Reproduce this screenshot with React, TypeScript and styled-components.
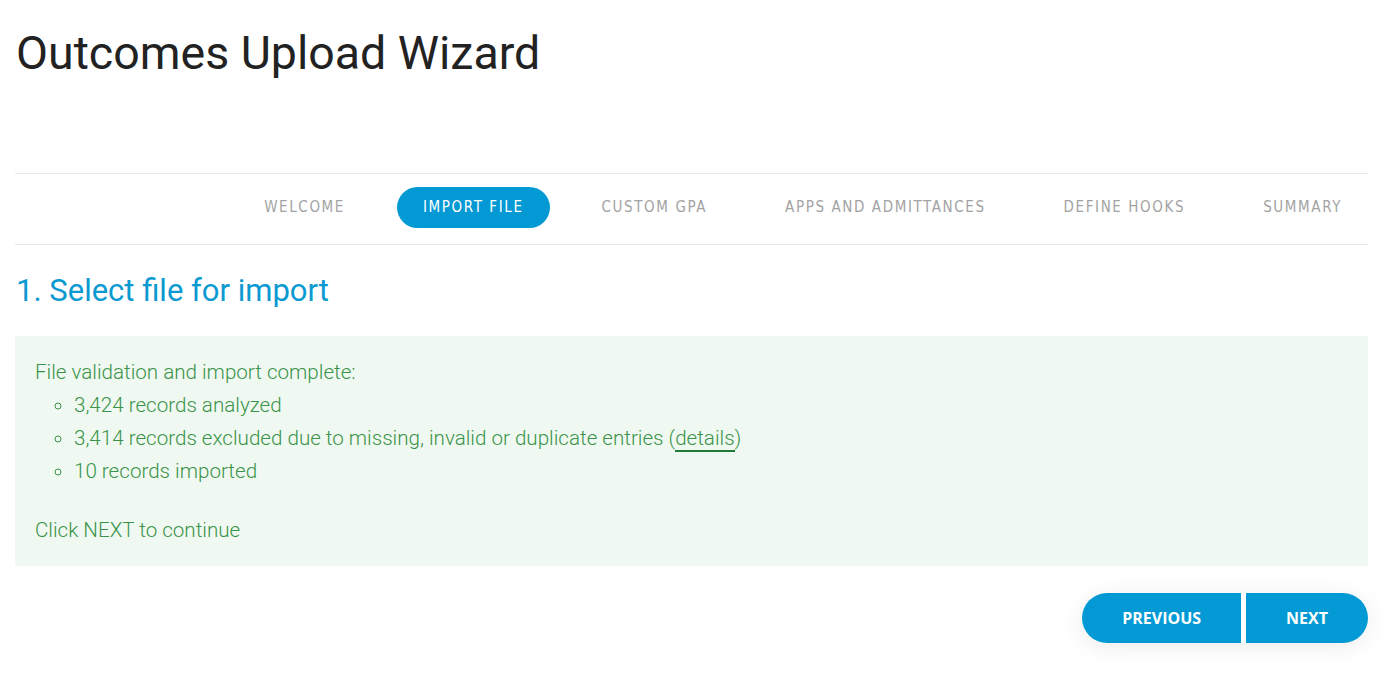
import styled, { createGlobalStyle } from 'styled-components';

const steps = [
  'Welcome',
  'Import File',
  'Custom GPA',
  'Apps and Admittances',
  'Define Hooks',
  'Summary',
];

const GlobalStyle = createGlobalStyle`
  body {
    margin: 0;
    background: #ffffff;
    font-family: Roboto, 'Liberation Sans', sans-serif;
  }
`;

const App = () => {
  const current = 1;

  return (
    <>
      <GlobalStyle />
      <Page>
        <Title>Outcomes Upload Wizard</Title>
        <StepNav>
          {steps.map((step, i) => (
            <Step key={step} active={i === current}>
              {step}
            </Step>
          ))}
        </StepNav>
        <SectionTitle>1. Select file for import</SectionTitle>
        <SuccessBox>
          <p>File validation and import complete:</p>
          <ul>
            <li>3,424 records analyzed</li>
            <li>
              3,414 records excluded due to missing, invalid or duplicate entries (
              <DetailsLink href="#">details</DetailsLink>)
            </li>
            <li>10 records imported</li>
          </ul>
          <p className="continue">Click NEXT to continue</p>
        </SuccessBox>
        <Actions>
          <ButtonGroup>
            <NavButton side="left" type="button">
              Previous
            </NavButton>
            <NavButton side="right" type="button">
              Next
            </NavButton>
          </ButtonGroup>
        </Actions>
      </Page>
    </>
  );
};

const Page = styled.div`
  padding: 0 18px 40px 15px;
`;

const Title = styled.h1`
  margin: 24px 0 0 1px;
  font-size: 46.5px;
  line-height: 58px;
  font-weight: 400;
  color: #222222;
`;

const StepNav = styled.nav`
  margin-top: 91px;
  border-top: 1px solid #e8e8e8;
  border-bottom: 1px solid #e8e8e8;
  padding: 13px 0 16px;
  display: flex;
  justify-content: flex-end;
  gap: 26px;
`;

const Step = styled.span<{ active?: boolean }>`
  display: flex;
  align-items: center;
  height: 41px;
  padding: 0 26px 2px;
  box-sizing: border-box;
  border-radius: 21px;
  font-family: 'DejaVu Sans Condensed', 'DejaVu Sans', sans-serif;
  font-size: 15px;
  letter-spacing: 1.6px;
  text-transform: uppercase;
  color: ${({ active }) => (active ? '#ffffff' : '#a3a3a3')};
  background: ${({ active }) => (active ? '#0399d4' : 'transparent')};
`;

const SectionTitle = styled.h2`
  margin: 27px 0 27px 1px;
  font-size: 31px;
  line-height: 37px;
  font-weight: 400;
  color: #0b99d2;
`;

const SuccessBox = styled.div`
  background: #f0f9f1;
  color: #3a934a;
  padding: 20px 20px 19px;
  font-size: 20.6px;
  font-weight: 300;
  line-height: 33px;

  p {
    margin: 0;
  }

  ul {
    margin: 0;
    padding-left: 39px;
    list-style: circle;
  }

  .continue {
    margin-top: 26px;
  }
`;

const DetailsLink = styled.a`
  color: #3a934a;
  text-decoration: none;
  border-bottom: 2px solid #1f7a36;
`;

const Actions = styled.div`
  display: flex;
  justify-content: flex-end;
  margin-top: 27px;
`;

const ButtonGroup = styled.div`
  display: flex;
  gap: 5px;
  border-radius: 25px;
  box-shadow: 0 4px 24px rgba(0, 0, 0, 0.08);
`;

const NavButton = styled.button<{ side: 'left' | 'right' }>`
  height: 50px;
  border: none;
  background: #0399d4;
  color: #ffffff;
  font-family: 'Open Sans', 'Liberation Sans', sans-serif;
  font-weight: 700;
  font-size: 16px;
  text-transform: uppercase;
  padding: 0 40px;
  border-radius: ${({ side }) => (side === 'left' ? '25px 0 0 25px' : '0 25px 25px 0')};
  cursor: pointer;
`;

export default App;
